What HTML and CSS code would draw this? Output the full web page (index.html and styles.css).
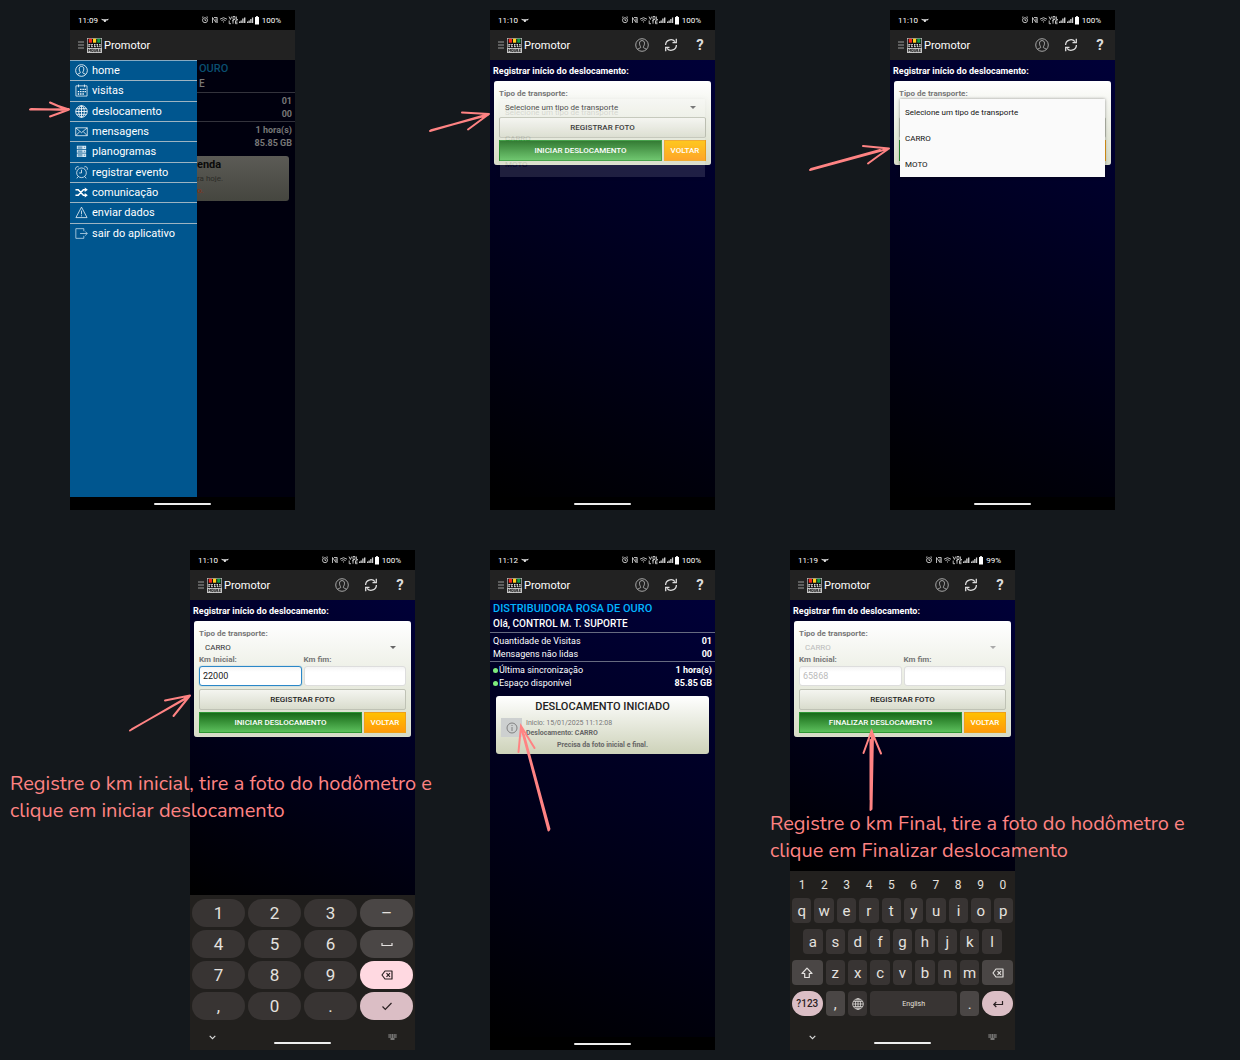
FILE: index.html
```html
<!DOCTYPE html>
<html lang="pt-BR">
<head>
<meta charset="utf-8">
<meta name="viewport" content="width=device-width, initial-scale=1">
<title>Promotor - Deslocamento</title>
<link rel="stylesheet" href="styles.css">
</head>
<body>
<svg class="sprite" aria-hidden="true">
  <symbol id="bird" viewBox="0 0 9 5"><path d="M0 .5 2.5 1.2 4 1 6 1.2 9 .4 7.3 2.6 5.8 2.5 5.2 4.2 3.6 4.2 2.8 2.6 1.4 2.2Z" fill="#ddd"/></symbol>
  <symbol id="status" viewBox="0 0 59 10">
    <g fill="none" stroke="#e4e4e4" stroke-width=".8">
      <circle cx="5" cy="5.2" r="2.5"/><path d="M5 3.8V5.4H6.2M2 2.5 3.3 1.6M8 2.5 6.700 1.600"/>
      <path d="M12.500 8V2.500L16 7.500V3.500M14 2.500H17.200V8"/>
      <path d="M20 4.200Q23.500 1.200 27 4.200M21.400 5.600Q23.500 3.800 25.600 5.600"/>
      <path d="M29 1.500 30.400 4.500 31.700 1.500M33 1.500H35V4.500H33ZM36.400 1.500V4.500H38M29.200 5.500V8.700H31M32 5.700H34M33 5.700V8.700M37.500 5.700H35.500V8.700H37.500M35.500 7.200H37.500"/>
    </g>
    <path d="M22.800 6.600H24.200L23.500 8ZM39 8V6.500H40.200V8ZM40.500 8V5.500H41.800V8ZM42.200 8V3.500H43.600V8ZM44 8V2.500H45.400V8ZM47 8V6.500H48.200V8ZM48.500 8V5.500H49.800V8ZM50.200 8V4H51.500V8ZM51.900 8V2.500H53.200V8Z" fill="#ccc"/>
    <path d="M55 2H56.200V1H57.800V2H59V9.500H55Z" fill="#fff"/>
  </symbol>
  <symbol id="burger" viewBox="0 0 6 8"><path d="M0 1H6M0 4H6M0 7H6" stroke="#999" stroke-width="1.100"/></symbol>
  <symbol id="logo" viewBox="0 0 15 15">
    <rect width="15" height="15" fill="#c4c4c4"/><rect x=".7" y=".7" width="13.600" height="9.300" fill="#111"/>
    <rect x="1.800" y=".7" width="3.200" height="4" fill="#f02a20"/><rect x="6" y=".7" width="3.200" height="4" fill="#ffd21e"/><rect x="10.200" y=".7" width="3.200" height="4" fill="#109a4a"/>
    <path d="M1.500 6.500H3.500M4.500 6.500H6M7 6.500H8.500M9.500 6.500H11M12 6.500H13.500M1.500 8.700H3M4 8.700H6M7 8.700H9M10 8.700H11.500M12.300 8.700H13.500M2 6V9M4.800 6V9M7.700 6V9M10.300 6V9M13 6V9" stroke="#e8e8e8" stroke-width=".8"/>
    <path d="M1.500 13.700V11.200L2.500 12.500 3.500 11.200V13.700M4.600 11.300H6.200V13.500H4.600ZM7.300 11V13.600H8.700V11.300M9.700 11V13.600M10.500 11V13.600H11.500M13.700 11.300H12.300V13.500H13.700M12.300 12.400H13.500" stroke="#111" stroke-width=".7" fill="none"/>
  </symbol>
  <symbol id="user" viewBox="0 0 14 14"><g fill="none" stroke="currentColor" stroke-width=".9"><circle cx="7" cy="7" r="6.300"/><path d="M2.500 11.300C3.500 10.200 5.700 10.300 5.700 9.300 5.700 8.400 4.500 7.600 4.500 5.200 4.500 3.500 5.500 2.600 7 2.600S9.500 3.500 9.500 5.200C9.500 7.600 8.300 8.400 8.300 9.300 8.300 10.300 10.500 10.200 11.500 11.300"/></g></symbol>
  <symbol id="sync" viewBox="0 0 14 14"><g fill="none" stroke="#ddd" stroke-width="1.300"><path d="M1.600 7A5.300 5.300 0 0 1 11 3.700M12.400 7A5.300 5.300 0 0 1 3 10.300"/><path d="M12.300 .8V4.600H8.500M1.700 13.200V9.400H5.500"/></g></symbol>
  <symbol id="cal" viewBox="0 0 14 14"><path d="M1 2H13V13H1ZM3.800 .5V3.500M10.200 .5V3.500" fill="none" stroke="#fff" stroke-width=".8"/><path d="M5.500 5H7V6.500H5.500ZM8 5H9.500V6.500H8ZM10.300 5H11.700V6.500H10.300ZM3 7.500H4.500V9H3ZM5.500 7.500H7V9H5.500ZM8 7.500H9.500V9H8ZM10.300 7.500H11.700V9H10.300ZM3 10H4.500V11.500H3ZM5.500 10H7V11.500H5.500ZM8 10H9.500V11.500H8Z" fill="#fff"/></symbol>
  <symbol id="globe" viewBox="0 0 14 14"><g fill="none" stroke="currentColor" stroke-width=".9"><circle cx="7" cy="7" r="6.200"/><ellipse cx="7" cy="7" rx="3" ry="6.200"/><path d="M7 .8V13.200M.8 7H13.200M1.800 4H12.200M1.800 10H12.200"/></g></symbol>
  <symbol id="mail" viewBox="0 0 14 14"><path d="M.8 3H13.200V11.500H.8ZM.8 3 7 8.300 13.200 3M.8 11.500 5.200 7M13.200 11.500 8.800 7" fill="none" stroke="#fff" stroke-width=".8"/></symbol>
  <symbol id="plan" viewBox="0 0 14 14"><path d="M2 .8H12V4.200H2ZM2 5H12V8.400H2ZM2 9.200H12V13H2Z" fill="#dcecf6"/><path d="M3 2.200H8M3 3.400H8M3 6.400H8M3 7.500H8M3 10.500H8M3 11.800H8M9.500 2.500H11M9.500 6.800H11M9.500 11H11" stroke="#00568f" stroke-width=".7"/></symbol>
  <symbol id="alarm" viewBox="0 0 14 14"><g fill="none" stroke="#fff" stroke-width=".8"><circle cx="7" cy="7.300" r="5.200"/><path d="M7 4V7.500H4.500M.8 4A2.300 2.300 0 0 1 4 1M13.200 4A2.300 2.300 0 0 0 10 1M3.300 11.500 2 13.300M10.700 11.500 12 13.300"/></g></symbol>
  <symbol id="shuffle" viewBox="0 0 14 14"><g fill="none" stroke="#fff" stroke-width="1.600"><path d="M.5 4H3.500L9 10H11.500M.5 10H3.500L9 4H11.500"/></g><path d="M10.500 1.500 13.800 4 10.500 6.500ZM10.500 7.500 13.800 10 10.500 12.500Z" fill="#fff"/></symbol>
  <symbol id="warn" viewBox="0 0 14 14"><path d="M7 1.200 13 12.500H1ZM7 5V9M7 10V11.200" fill="none" stroke="#fff" stroke-width=".8"/></symbol>
  <symbol id="exit" viewBox="0 0 14 14"><path d="M9.500 4.500V1.800H.9V12.200H9.500V9.500M5.500 7H13.200M11 4.800 13.200 7 11 9.200" fill="none" stroke="#cfe2ef" stroke-width=".8"/></symbol>
  <symbol id="info" viewBox="0 0 12 12"><g fill="none" stroke="#777" stroke-width=".9"><circle cx="6" cy="6" r="5"/><path d="M6 5V9M6 3V4"/></g></symbol>
  <symbol id="erase" viewBox="0 0 12 10"><path d="M4 1H11V9H4L1 5ZM5.500 3.200 9 6.800M9 3.200 5.500 6.800" fill="none" stroke="currentColor" stroke-width="1.200" stroke-linejoin="round"/></symbol>
  <symbol id="check" viewBox="0 0 12 10"><path d="M1.500 5.500 4.300 8.300 10.500 2" fill="none" stroke="currentColor" stroke-width="1.200"/></symbol>
  <symbol id="space" viewBox="0 0 12 10"><path d="M1 4V6.500H11V4" fill="none" stroke="currentColor" stroke-width="1.200"/></symbol>
  <symbol id="shift" viewBox="0 0 12 12"><path d="M6 1.200 11 6.500H8.300V10.500H3.700V6.500H1Z" fill="none" stroke="currentColor" stroke-width="1.200" stroke-linejoin="round"/></symbol>
  <symbol id="enter" viewBox="0 0 12 10"><path d="M10.500 2V5.500H1.800M4.300 3 1.800 5.500 4.300 8" fill="none" stroke="currentColor" stroke-width="1.200"/></symbol>
  <symbol id="chev" viewBox="0 0 8 6"><path d="M1.500 1.500 4 4 6.500 1.500" fill="none" stroke="#ddd" stroke-width="1"/></symbol>
  <symbol id="kbd" viewBox="0 0 9 6"><path d="M.5 1H8.500M.5 3H8.500" stroke="#ccc" stroke-width="1.200" stroke-dasharray="1.200 .5"/><path d="M2.500 5H6.500" stroke="#ccc"/></symbol>
</svg>

<main class="board">

  <section class="phone p1" aria-label="Menu">
    <div class="status"><time>11:09</time><svg class="i-bird"><use href="#bird"/></svg><svg class="i-status"><use href="#status"/></svg><span>100%</span></div>
    <header class="bar"><svg class="i-burger"><use href="#burger"/></svg><svg class="i-logo"><use href="#logo"/></svg><h2>Promotor</h2></header>
    <div class="content split">
      <nav class="menu">
        <a href="#home"><svg><use href="#user"/></svg>home</a>
        <a href="#visitas"><svg><use href="#cal"/></svg>visitas</a>
        <a href="#deslocamento"><svg><use href="#globe"/></svg>deslocamento</a>
        <a href="#mensagens"><svg><use href="#mail"/></svg>mensagens</a>
        <a href="#planogramas"><svg><use href="#plan"/></svg>planogramas</a>
        <a href="#evento"><svg><use href="#alarm"/></svg>registrar evento</a>
        <a href="#comunicacao"><svg><use href="#shuffle"/></svg>comunicação</a>
        <a href="#enviar"><svg><use href="#warn"/></svg>enviar dados</a>
        <a href="#sair"><svg><use href="#exit"/></svg>sair do aplicativo</a>
      </nav>
      <div class="home dim">
        <div class="who"><h3>OURO</h3><p>E</p></div>
        <div class="stats"><p><b>01</b></p><p><b>00</b></p></div>
        <div class="stats last"><p><b>1 hora(s)</b></p><p><b>85.85 GB</b></p></div>
        <div class="dimcard"><h4>enda</h4><p>ra hoje.</p><p class="alert">o.</p></div>
      </div>
    </div>
    <div class="nav"><i></i></div>
  </section>

  <section class="phone p2" aria-label="Registrar início">
    <div class="status"><time>11:10</time><svg class="i-bird"><use href="#bird"/></svg><svg class="i-status"><use href="#status"/></svg><span>100%</span></div>
    <header class="bar"><svg class="i-burger"><use href="#burger"/></svg><svg class="i-logo"><use href="#logo"/></svg><h2>Promotor</h2>
      <div class="tools"><button aria-label="Perfil"><svg><use href="#user"/></svg></button><button aria-label="Atualizar"><svg><use href="#sync"/></svg></button><button>?</button></div></header>
    <div class="content">
      <h3 class="title">Registrar início do deslocamento:</h3>
      <form class="card">
        <label for="t2">Tipo de transporte:</label>
        <div class="pick"><select id="t2"><option>Selecione um tipo de transporte</option></select></div>
        <button type="button" class="btn photo">REGISTRAR FOTO</button>
        <div class="actions"><button type="button" class="btn go">INICIAR DESLOCAMENTO</button><button type="button" class="btn back">VOLTAR</button></div>
        <ul class="options fading"><li>Selecione um tipo de transporte</li><li>CARRO</li><li>MOTO</li></ul>
      </form>
    </div>
    <div class="nav"><i></i></div>
  </section>

  <section class="phone p3" aria-label="Tipo de transporte">
    <div class="status"><time>11:10</time><svg class="i-bird"><use href="#bird"/></svg><svg class="i-status"><use href="#status"/></svg><span>100%</span></div>
    <header class="bar"><svg class="i-burger"><use href="#burger"/></svg><svg class="i-logo"><use href="#logo"/></svg><h2>Promotor</h2>
      <div class="tools"><button aria-label="Perfil"><svg><use href="#user"/></svg></button><button aria-label="Atualizar"><svg><use href="#sync"/></svg></button><button>?</button></div></header>
    <div class="content">
      <h3 class="title">Registrar início do deslocamento:</h3>
      <form class="card">
        <label for="t3">Tipo de transporte:</label>
        <div class="pick"><select id="t3"></select></div>
        <button type="button" class="btn photo" aria-label="Foto"></button>
        <div class="actions"><button type="button" class="btn go" aria-label="Iniciar"></button><button type="button" class="btn back" aria-label="Voltar"></button></div>
        <ul class="options"><li>Selecione um tipo de transporte</li><li>CARRO</li><li>MOTO</li></ul>
      </form>
    </div>
    <div class="nav"><i></i></div>
  </section>

  <section class="phone p4" aria-label="Km inicial">
    <div class="status"><time>11:10</time><svg class="i-bird"><use href="#bird"/></svg><svg class="i-status"><use href="#status"/></svg><span>100%</span></div>
    <header class="bar"><svg class="i-burger"><use href="#burger"/></svg><svg class="i-logo"><use href="#logo"/></svg><h2>Promotor</h2>
      <div class="tools"><button aria-label="Perfil"><svg><use href="#user"/></svg></button><button aria-label="Atualizar"><svg><use href="#sync"/></svg></button><button>?</button></div></header>
    <div class="content">
      <h3 class="title">Registrar início do deslocamento:</h3>
      <form class="card">
        <label for="t4">Tipo de transporte:</label>
        <div class="pick"><select id="t4"><option>CARRO</option></select></div>
        <div class="kms"><label for="a4">Km Inicial:</label><label for="b4">Km fim:</label><input id="a4" class="active" value="22000"><input id="b4"></div>
        <button type="button" class="btn photo">REGISTRAR FOTO</button>
        <div class="actions"><button type="button" class="btn go">INICIAR DESLOCAMENTO</button><button type="button" class="btn back">VOLTAR</button></div>
      </form>
    </div>
    <div class="keyboard">
      <div class="pad">
        <button>1</button><button>2</button><button>3</button><button class="alt">–</button>
        <button>4</button><button>5</button><button>6</button><button class="alt" aria-label="Espaço"><svg><use href="#space"/></svg></button>
        <button>7</button><button>8</button><button>9</button><button class="pink hot" aria-label="Apagar"><svg><use href="#erase"/></svg></button>
        <button>,</button><button>0</button><button>.</button><button class="pink" aria-label="Confirmar"><svg><use href="#check"/></svg></button>
      </div>
      <div class="kfoot"><svg class="i-chev"><use href="#chev"/></svg><i></i><svg class="i-kbd"><use href="#kbd"/></svg></div>
    </div>
  </section>

  <section class="phone p5" aria-label="Deslocamento iniciado">
    <div class="status"><time>11:12</time><svg class="i-bird"><use href="#bird"/></svg><svg class="i-status"><use href="#status"/></svg><span>100%</span></div>
    <header class="bar"><svg class="i-burger"><use href="#burger"/></svg><svg class="i-logo"><use href="#logo"/></svg><h2>Promotor</h2>
      <div class="tools"><button aria-label="Perfil"><svg><use href="#user"/></svg></button><button aria-label="Atualizar"><svg><use href="#sync"/></svg></button><button>?</button></div></header>
    <div class="content home">
      <div class="who"><h3>DISTRIBUIDORA ROSA DE OURO</h3><p>Olá, CONTROL M. T. SUPORTE</p></div>
      <div class="stats"><p>Quantidade de Visitas<b>01</b></p><p>Mensagens não lidas<b>00</b></p></div>
      <div class="stats last"><p class="ok">Última sincronização<b>1 hora(s)</b></p><p class="ok">Espaço disponível<b>85.85 GB</b></p></div>
      <article class="trip">
        <h4>DESLOCAMENTO INICIADO</h4>
        <div class="info"><button aria-label="Detalhes"><svg><use href="#info"/></svg></button><p>Inicio: 15/01/2025 11:12:08<br><b>Deslocamento: CARRO</b></p></div>
        <p class="need">Precisa da foto inicial e final.</p>
      </article>
    </div>
    <div class="nav"><i></i></div>
  </section>

  <section class="phone p6" aria-label="Registrar fim">
    <div class="status"><time>11:19</time><svg class="i-bird"><use href="#bird"/></svg><svg class="i-status"><use href="#status"/></svg><span>99%</span></div>
    <header class="bar"><svg class="i-burger"><use href="#burger"/></svg><svg class="i-logo"><use href="#logo"/></svg><h2>Promotor</h2>
      <div class="tools"><button aria-label="Perfil"><svg><use href="#user"/></svg></button><button aria-label="Atualizar"><svg><use href="#sync"/></svg></button><button>?</button></div></header>
    <div class="content">
      <h3 class="title">Registrar fim do deslocamento:</h3>
      <form class="card">
        <label for="t6">Tipo de transporte:</label>
        <div class="pick off"><select id="t6" disabled><option>CARRO</option></select></div>
        <div class="kms"><label for="a6">Km Inicial:</label><label for="b6">Km fim:</label><input id="a6" value="65868" disabled><input id="b6"></div>
        <button type="button" class="btn photo">REGISTRAR FOTO</button>
        <div class="actions"><button type="button" class="btn go">FINALIZAR DESLOCAMENTO</button><button type="button" class="btn back">VOLTAR</button></div>
      </form>
    </div>
    <div class="keyboard">
      <div class="digits"><button>1</button><button>2</button><button>3</button><button>4</button><button>5</button><button>6</button><button>7</button><button>8</button><button>9</button><button>0</button></div>
      <div class="keys">
        <button>q</button><button>w</button><button>e</button><button>r</button><button>t</button><button>y</button><button>u</button><button>i</button><button>o</button><button>p</button>
        <button class="inset">a</button><button>s</button><button>d</button><button>f</button><button>g</button><button>h</button><button>j</button><button>k</button><button>l</button>
        <button class="alt wide first" aria-label="Maiúsculas"><svg><use href="#shift"/></svg></button><button>z</button><button>x</button><button>c</button><button>v</button><button>b</button><button>n</button><button>m</button><button class="alt wide" aria-label="Apagar"><svg><use href="#erase"/></svg></button>
        <button class="pink wide sym">?123</button><button class="alt">,</button><button aria-label="Idioma"><svg><use href="#globe"/></svg></button><button class="bar-key">English</button><button class="alt">.</button><button class="pink wide" aria-label="Enter"><svg><use href="#enter"/></svg></button>
      </div>
      <div class="kfoot"><svg class="i-chev"><use href="#chev"/></svg><i></i><svg class="i-kbd"><use href="#kbd"/></svg></div>
    </div>
  </section>

  <p class="note n1">Registre o km inicial, tire a foto do hodômetro e<br>clique em iniciar deslocamento</p>
  <p class="note n2">Registre o km Final, tire a foto do hodômetro e<br>clique em Finalizar deslocamento</p>

  <svg class="arrows" aria-hidden="true">
    <path d="M30 109.500 69 109.200M31 109 68 110M50 102.500Q59 107 69 109.500M50 116.500Q60 113 69 109.500"/>
    <path d="M430 131 489 114M431 130.200 488 115M462 112.500 489 114M468 129.500 489 114"/>
    <path d="M810 170 889 148.500M811 169 880 150M863 146 889 148.500M868 163.500Q878 156 889 148.500"/>
    <path d="M130 730.500 190 695.500M132 729 188 697.500M165 700.500 190 695.500M173.500 716 190 695.500"/>
    <path d="M521 727 549 830M522 730 548.500 830.500M524 735 549.500 829M518.500 752 521 726 534.500 748"/>
    <path d="M872 731 870.500 810M873 734 871.500 809M870.500 740 870.500 800M863.500 753 871.500 731 881 753.500"/>
  </svg>
</main>
</body>
</html>
```
FILE: styles.css
```css
* { box-sizing: border-box; margin: 0; padding: 0; }
body { background: #14181c; font-family: Roboto, "Liberation Sans", sans-serif; }
button, input, select { font: inherit; color: inherit; border: 0; background: none; }
button { display: flex; align-items: center; justify-content: center; }
ul { list-style: none; }
.sprite { position: absolute; width: 0; height: 0; }

/* Whiteboard: screens, notes and arrows are pinned to a free canvas */
.board { position: relative; min-height: 100vh; overflow: hidden; }
.phone { position: absolute; width: 225px; height: 500px; display: flex; flex-direction: column; background: #000; color: #fff; }
.p1 { left: 70px; top: 10px; }
.p2 { left: 490px; top: 10px; }
.p3 { left: 890px; top: 10px; }
.p4 { left: 190px; top: 550px; }
.p5 { left: 490px; top: 550px; }
.p6 { left: 790px; top: 550px; }
.note { position: absolute; color: #ff8383; font: 20px/27px Nunito, Lato, sans-serif; white-space: nowrap; }
.n1 { left: 10px; top: 770px; }
.n2 { left: 770px; top: 810px; }
.arrows { position: absolute; left: 0; top: 0; width: 100%; height: 100%; pointer-events: none; fill: none; stroke: #ff8383; stroke-width: 2; stroke-linecap: round; }

/* Device chrome */
.status { display: flex; align-items: center; height: 20px; padding: 0 14px 0 8px; font-size: 8px; }
.i-bird { width: 8px; height: 5px; margin-left: 3px; }
.i-status { width: 59px; height: 10px; margin: 0 3px 0 auto; }
.bar { display: flex; align-items: center; height: 30px; padding: 0 8px; background: #222; }
.bar h2 { font-size: 11px; font-weight: 400; margin-left: 2px; }
.i-burger { width: 6px; height: 8px; }
.i-logo { width: 15px; height: 15px; margin-left: 3px; }
.tools { display: flex; margin-left: auto; gap: 15px; }
.tools button { width: 14px; height: 14px; font-size: 15px; font-weight: 700; color: #ddd; }
.tools button:first-child { color: #b4b4b4; }
.tools svg { width: 14px; height: 14px; }
.content { flex: 1; background: linear-gradient(205deg, #000038, #00001c 50%, #000); }
.nav { display: flex; justify-content: center; height: 13px; padding-top: 6px; background: #000; }
.nav i, .kfoot i { width: 57px; height: 2px; border-radius: 1px; background: #eee; }

/* Side menu */
.split { display: flex; background: #00000e; }
.menu { width: 127px; background: #00568f; display: grid; grid-template-rows: repeat(9, 1fr) 253px; border-top: 1px solid #86aac2; }
.menu a { display: flex; align-items: center; gap: 4px; padding-left: 5px; color: #fff; font-size: 11px; text-decoration: none; border-bottom: 1px solid #9db4c2; }
.menu a:last-child { border-bottom: 0; }
.menu svg { width: 13px; height: 13px; }

/* Registration card */
.title { font-size: 9px; line-height: 21px; padding: 1px 3px 0; margin-bottom: -1px; }
.card { position: relative; margin: 0 4px; padding: 6px 5px 4px; border-radius: 3px; background: linear-gradient(#fff, #d6dbc6); color: #333; font-size: 8px; box-shadow: inset 0 0 1px #fff; }
.card label { display: block; font-weight: 700; color: #777; line-height: 14px; font-size: 8px; }
.pick { position: relative; height: 13px; }
.pick select { appearance: none; display: block; width: 100%; height: 13px; padding-left: 6px; font-size: 8px; color: #333; opacity: 1; }
.pick::after { content: ""; position: absolute; right: 10px; top: 5px; border: 3px solid transparent; border-top-color: #666; border-bottom: 0; }
.pick.off select { color: #bbb; }
.pick.off::after { border-top-color: #aaa; }
.card .kms { display: grid; grid-template-columns: 1fr 1fr; column-gap: 2px; }
.card .kms label { line-height: 12px; }
.kms input { width: 100%; height: 20px; padding-left: 3px; font-size: 9px; background: linear-gradient(#f4f4f4, #fff 5px); border: 1px solid #ddd; border-radius: 3px; color: #222; }
.kms input:disabled { color: #bbb; }
.kms .active { border-color: #2b87c8; box-shadow: 0 0 1px #2b87c8; }
.btn { height: 21px; font-size: 8px; font-weight: 500; color: #fff; }
.photo { width: 100%; margin-top: 3px; color: #222; background: linear-gradient(#f4f5f0, #d9dccd); border: 1px solid #bfc2b5; border-radius: 2px; }
.actions { display: flex; gap: 2px; margin-top: 2px; }
.go { flex: 1; background: linear-gradient(#186a18, #5cbf5c); border: 1px solid #2e9634; }
.back { width: 42px; background: linear-gradient(#ffc000, #ff9a0a); border: 1px solid #eea018; }
.options { position: absolute; left: 6px; right: 6px; top: 18px; background: #fafafa; color: #111; box-shadow: 0 0 3px #0006; }
.options li { display: flex; align-items: center; height: 26px; padding-left: 5px; }
.fading { opacity: .12; }

/* Home screen */
.who { padding: 1px 3px; border-bottom: 1px solid #666a80; }
.who h3 { font-size: 11px; line-height: 16px; font-weight: 500; color: #00b4ff; white-space: nowrap; }
.who p { font-size: 10px; line-height: 14px; font-weight: 500; }
.stats { padding: 2px 3px 0; font-size: 9px; line-height: 13px; border-bottom: 1px solid #666a80; }
.stats p { display: flex; align-items: center; }
.stats b { margin-left: auto; font-weight: 700; }
.last { border: 0; }
.ok::before { content: ""; width: 5px; height: 5px; margin-right: 1px; border-radius: 50%; background: #7dea7d; }
.trip { margin: 6px 6px 0; padding-bottom: 2px; border-radius: 3px; background: linear-gradient(#fff, #cdd2b9); color: #777; font-size: 7px; text-align: center; }
.trip h4 { font-size: 11px; line-height: 22px; font-weight: 500; color: #222; }
.info { display: flex; gap: 4px; padding-left: 5px; text-align: left; line-height: 10px; }
.info button { width: 21px; height: 19px; background: #cdd0d0; }
.info svg { width: 12px; height: 12px; }
.info b, .need { color: #666; font-weight: 700; }
.need { line-height: 14px; }
.dim { flex: 1; color: #777; }
.dim .who { padding-left: 2px; border-color: #33333c; }
.dim .who h3 { color: #0a4f70; }
.dim .stats { border-color: #33333c; }
.dim .last { border: 0; }
.dimcard { margin: 6px 6px 0 0; height: 45px; border-radius: 0 3px 3px 0; background: linear-gradient(#5c5b56, #45463f); font-size: 8px; line-height: 12px; color: #2c2c28; }
.dimcard h4 { font-size: 11px; line-height: 17px; color: #0a0a0a; }
.dimcard .alert { color: #8c3014; }

/* On-screen keyboards */
.keyboard { background: #22201e; color: #e4e1df; }
.keyboard button { background: #383433; }
.keyboard .alt { background: #4a4645; }
.keyboard .pink { background: #dbbec5; color: #2a2022; }
.keyboard .hot { background: #ffd9e1; }
.keyboard svg { width: 12px; height: 12px; }
.pad { display: grid; grid-template-columns: repeat(4, 1fr); gap: 3px; padding: 4px 2px 0; }
.pad button { height: 28px; border-radius: 14px; font-size: 17px; }
.digits { display: grid; grid-template-columns: repeat(10, 1fr); padding: 0 1px; }
.keyboard .digits button { height: 27px; background: none; font-size: 12px; }
.keys { display: grid; grid-template-columns: repeat(20, 1fr); gap: 6px 3px; padding: 0 2px; }
.keys button { grid-column: span 2; height: 25px; border-radius: 4px; font-size: 15px; }
.keys .inset { grid-column: 2 / span 2; }
.keys .wide { grid-column: span 3; }
.keys .first { grid-column: 1 / span 3; }
.keys .bar-key { grid-column: span 8; font-size: 7px; }
.keys .pink { border-radius: 13px; }
.keys .sym { font-size: 10px; font-weight: 500; }
.kfoot { display: flex; align-items: center; justify-content: space-between; height: 30px; padding: 4px 18px 0; }
.kfoot i { margin-top: 12px; }
.p6 .kfoot { height: 34px; padding-top: 8px; }
.keyboard .i-chev { width: 9px; height: 7px; }
.keyboard .i-kbd { width: 9px; height: 6px; }
```
